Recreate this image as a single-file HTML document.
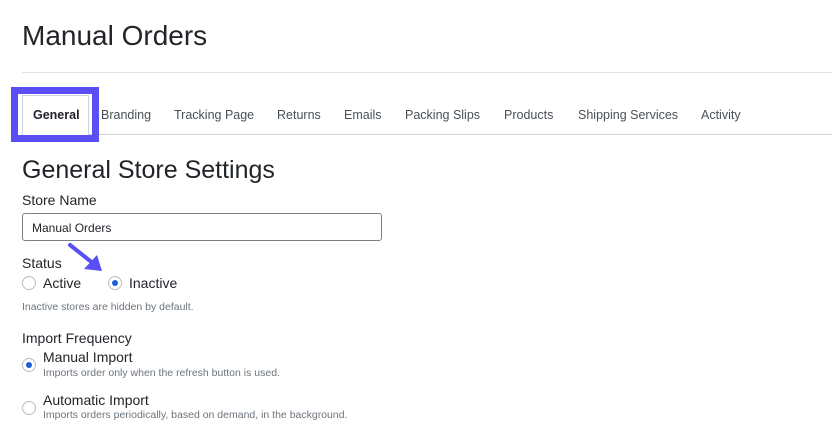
<!DOCTYPE html>
<html><head><meta charset="utf-8"><style>
body{margin:0;width:832px;height:443px;background:#fff;font-family:"Liberation Sans",sans-serif;color:#212529;position:relative;overflow:hidden}
.a{position:absolute;white-space:nowrap}
.tab{position:absolute;top:108px;font-size:12.5px;color:#495057}
.radio{position:absolute;width:14px;height:14px;border:1px solid #b8bec4;border-radius:50%;box-sizing:border-box;background:#fff}
.radio.on::after{content:"";position:absolute;left:3px;top:3px;width:6px;height:6px;border-radius:50%;background:#1a5fd9}
.small{font-size:10.5px;color:#6c757d}
</style></head><body>
<div class="a" style="left:22px;top:20px;font-size:28px;color:#212529">Manual Orders</div>
<div class="a" style="left:22px;top:72px;width:810px;height:1px;background:#dee2e6"></div>
<div class="a" style="left:22px;top:134px;width:810px;height:1px;background:#ced4da"></div>
<div class="a" style="left:22px;top:95px;width:67px;height:40px;border:1px solid #ced4da;border-bottom:none;background:#fff;box-sizing:border-box"></div>
<div class="a" style="left:11px;top:87px;width:88px;height:55px;border:7px solid #5a4ff5;box-sizing:border-box"></div>
<div class="tab" style="left:33px;color:#212529;font-weight:bold">General</div>
<div class="tab" style="left:101px">Branding</div>
<div class="tab" style="left:174px">Tracking Page</div>
<div class="tab" style="left:277px">Returns</div>
<div class="tab" style="left:344px">Emails</div>
<div class="tab" style="left:405px">Packing Slips</div>
<div class="tab" style="left:504px">Products</div>
<div class="tab" style="left:578px">Shipping Services</div>
<div class="tab" style="left:701px">Activity</div>
<div class="a" style="left:22px;top:156px;font-size:25px">General Store Settings</div>
<div class="a" style="left:22px;top:192px;font-size:14px">Store Name</div>
<div class="a" style="left:22px;top:213px;width:360px;height:28px;border:1px solid #7b8088;border-radius:3px;box-sizing:border-box;font-size:12px;padding:7px 9px">Manual Orders</div>
<div class="a" style="left:22px;top:255px;font-size:14px">Status</div>
<div class="radio" style="left:22px;top:276px"></div>
<div class="a" style="left:43px;top:275px;font-size:14px">Active</div>
<div class="radio on" style="left:108px;top:276px"></div>
<div class="a" style="left:129px;top:275px;font-size:14px">Inactive</div>
<div class="a small" style="left:22px;top:301px">Inactive stores are hidden by default.</div>
<svg class="a" style="left:64px;top:240px" width="42" height="36"><line x1="6" y1="5" x2="30" y2="24" stroke="#5a4ff5" stroke-width="4" stroke-linecap="round"/><polygon points="38,31 20,29 33,15" fill="#5a4ff5"/></svg>
<div class="a" style="left:22px;top:330px;font-size:14px">Import Frequency</div>
<div class="radio on" style="left:22px;top:358px"></div>
<div class="a" style="left:43px;top:349px;font-size:14px">Manual Import</div>
<div class="a small" style="left:43px;top:367px">Imports order only when the refresh button is used.</div>
<div class="radio" style="left:22px;top:401px"></div>
<div class="a" style="left:43px;top:392px;font-size:14px">Automatic Import</div>
<div class="a small" style="left:43px;top:409px">Imports orders periodically, based on demand, in the background.</div>
</body></html>
